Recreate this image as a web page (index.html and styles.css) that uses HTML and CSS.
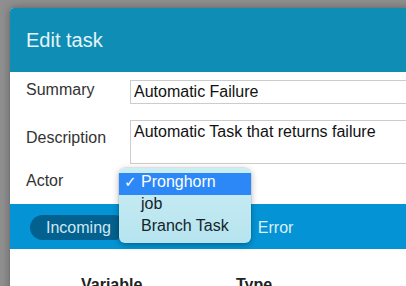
FILE: index.html
```html
<!DOCTYPE html>
<html lang="en">
<head>
    <meta charset="UTF-8">
    <meta name="viewport" content="width=device-width, initial-scale=1.0">
    <title>Edit task</title>
    <link rel="stylesheet" href="styles.css">
</head>
<body>
    <div class="modal">
        <div class="modal-header">Edit task</div>
        <form class="task-form">
            <div class="field">
                <label for="summary">Summary</label>
                <input type="text" id="summary" value="Automatic Failure">
            </div>
            <div class="field field-desc">
                <label for="description">Description</label>
                <textarea id="description">Automatic Task that returns failure</textarea>
            </div>
            <div class="field field-actor">
                <label>Actor</label>
            </div>
        </form>

        <div class="tabs">
            <span class="tab active">Incoming</span>
            <span class="tab hidden-tab">Outgoing</span>
            <span class="tab">Error</span>
        </div>

        <div class="vars">
            <div class="vars-head">Variable</div>
            <div class="vars-head">Type</div>
        </div>
    </div>

    <ul class="select-menu">
        <li class="selected"><span class="check">&#10003;</span>Pronghorn</li>
        <li>job</li>
        <li>Branch Task</li>
    </ul>
</body>
</html>
```

FILE: styles.css
```css
body {
    margin: 0;
    background: #8f8f8f;
    font-family: "Liberation Sans", Arial, sans-serif;
    overflow: hidden;
}
.modal {
    margin: 8px 0 0 10px;
    width: 440px;
    height: 320px;
    background: #fff;
    border-radius: 4px 4px 0 0;
    box-shadow: 0 0 9px rgba(0, 0, 0, 0.35);
}
.modal-header {
    height: 64px;
    line-height: 64px;
    padding-left: 16px;
    background: #0f8db4;
    color: #e6f5fa;
    font-size: 20px;
    border-radius: 4px 4px 0 0;
}
.task-form {
    padding: 8px 0 0 16px;
    margin: 0;
}
.field {
    display: flex;
    align-items: flex-start;
}
.field label {
    width: 104px;
    flex: none;
    font-size: 16px;
    line-height: 20px;
    color: #333;
}
.field input,
.field textarea {
    box-sizing: border-box;
    width: 300px;
    margin: 0;
    border: 1px solid #ccc;
    border-radius: 0;
    font-family: inherit;
    font-size: 16px;
    color: #111;
}
.field input {
    height: 24px;
    padding: 0 3px;
}
.field-desc {
    margin-top: 16px;
}
.field-desc label {
    padding-top: 8px;
}
.field-desc textarea {
    height: 44px;
    padding: 2px 3px 0;
    resize: none;
    line-height: 18px;
}
.field-actor {
    margin-top: 7px;
    height: 20px;
}
.tabs {
    margin-top: 13px;
    height: 45px;
    box-sizing: border-box;
    padding: 11px 20px;
    background: #0494d5;
    display: flex;
    gap: 9px;
}
.tab {
    height: 25px;
    line-height: 25px;
    padding: 0 16px;
    border-radius: 13px;
    font-size: 16px;
    color: #dcf0f9;
}
.tab.active {
    background: #03618f;
    color: #cde8f4;
}
/* covered by the open select menu */
.hidden-tab {
    visibility: hidden;
}
.vars {
    display: grid;
    grid-template-columns: 155px 155px;
    padding: 26px 0 0 71px;
}
.vars-head {
    font-size: 16px;
    font-weight: bold;
    line-height: 20px;
    color: #222;
}
.select-menu {
    position: absolute;
    left: 119px;
    top: 168px;
    width: 132px;
    height: 75px;
    box-sizing: border-box;
    margin: 0;
    padding: 5px 0 0;
    list-style: none;
    border-radius: 6px;
    background: linear-gradient(#cbedf4, #b6e4ef);
    box-shadow: 0 2px 7px rgba(0, 0, 0, 0.3), 0 0 0 0.5px rgba(0, 0, 0, 0.12);
    font-size: 16px;
    color: #15242a;
}
.select-menu li {
    height: 22px;
    line-height: 17px;
    padding-left: 22px;
    position: relative;
}
.select-menu li.selected {
    background: #2c88f6;
    color: #fff;
}
.check {
    position: absolute;
    left: 5px;
    top: 1px;
    font-family: "DejaVu Sans", sans-serif;
    font-size: 15px;
    font-weight: bold;
}
```
